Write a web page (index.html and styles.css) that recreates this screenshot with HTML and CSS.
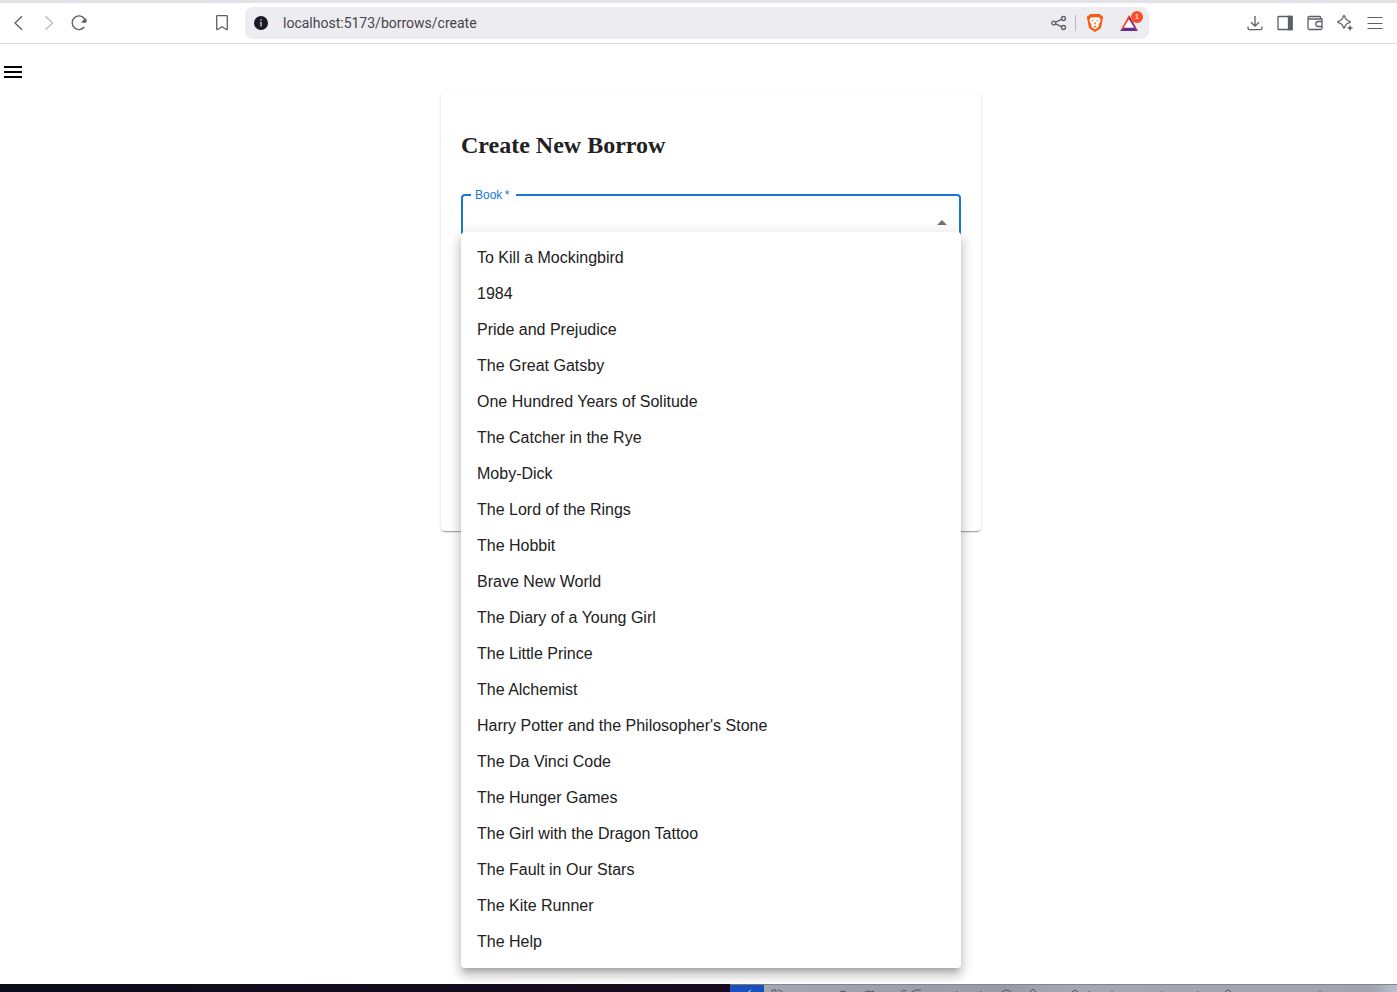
FILE: index.html
```html
<!DOCTYPE html>
<html lang="en">
<head>
<meta charset="utf-8">
<meta name="viewport" content="width=device-width, initial-scale=1">
<title>Create New Borrow</title>
<link rel="stylesheet" href="styles.css">
</head>
<body>
<header class="toolbar">
  <nav class="toolbar-left" aria-label="Navigation">
    <button class="tool" type="button" aria-label="Back"><svg viewBox="0 0 20 20"><path d="M13 3.3 6 10l7 6.7"/></svg></button>
    <button class="tool tool-off" type="button" aria-label="Forward" disabled><svg viewBox="0 0 20 20"><path d="m6.500 3.300 7 6.700-7 6.700"/></svg></button>
    <button class="tool" type="button" aria-label="Reload"><svg viewBox="0 0 20 20"><path d="M15.300 14a6.800 6.800 0 1 1 0-8.500l.7 2"/><path class="solid" d="m13.500 8.800 3.200-2.600.4 2.500-1.500.600z"/></svg></button>
    <button class="tool tool-end" type="button" aria-label="Bookmark"><svg viewBox="0 0 20 20"><path d="M4.700 3.400q0-.7.7-.7h9.200q.7 0 .7.700V16q0 1-.9.500L10 13.700l-4.400 2.800q-.9.500-.9-.5z"/></svg></button>
  </nav>
  <div class="address">
    <svg class="info" viewBox="0 0 14 14" aria-hidden="true"><circle cx="7" cy="7" r="7" fill="#1b1a22"/><path d="M6.2 3.3h1.700v1.500H6.200zM5.800 6h2.100v4.600H6.200V7.200h-.4z" fill="#aaa9b2"/></svg>
    <input class="url" type="text" aria-label="Address" value="localhost:5173/borrows/create">
    <button class="tool" type="button" aria-label="Share"><svg viewBox="0 0 20 20"><circle cx="4.700" cy="10" r="1.900"/><circle cx="14.500" cy="5.500" r="2"/><circle cx="14.500" cy="14.500" r="2"/><path d="m6.600 9.200 6-2.900M6.600 10.800l6 2.900"/></svg></button>
    <span class="divider"></span>
    <button class="tool shield" type="button" aria-label="Shields"><svg viewBox="0 0 20 20"><path fill="#fb5a12" stroke="none" d="M5.200 1h9.600l1.700 1.800h1.200l.3 3-.4 1-1.400 7.100q-.3 1.300-1.800 2.400L10 19l-4.400-2.700q-1.500-1.100-1.800-2.400L2.400 6.800l-.4-1 .3-3h1.200z"/><path fill="#fff" stroke="none" d="m6 4.300 2.200.2 1.800-.6 1.800.6 2.200-.2 1.700 2.400-.7 2.500-1.500 2.500.4 1.800-3.900 3-3.900-3 .4-1.800L5 9.200l-.7-2.500z"/><path fill="#fb5a12" stroke="none" d="m6 7 2.700.6-.8 1zM14 7l-2.700.6.8 1zM9.600 9h.8l.4 2.100-.8.700-.8-.7zM8.300 13.400l1.700-.7 1.700.7-1.700 1z"/></svg></button>
    <button class="tool rewards" type="button" aria-label="Rewards"><svg viewBox="0 0 20 20"><path fill="#ff4b24" stroke="none" d="M10 2v4.500L5 14.600 1 18z"/><path fill="#9b1f63" stroke="none" d="M10 2v4.500l5 8.100 4 3.400z"/><path fill="#662d91" stroke="none" d="M1 18h18l-4-3.400H5z"/><path fill="#fff" stroke="none" d="m10 6.500 5 8.100H5z"/></svg><span class="badge">1</span></button>
  </div>
  <div class="toolbar-right">
    <button class="tool" type="button" aria-label="Downloads"><svg viewBox="0 0 20 20"><path d="M10 3v10M6 9.300l4 3.900 4-3.900M3 13.500V15q0 1.700 1.700 1.700h10.600Q17 16.700 17 15v-1.500"/></svg></button>
    <button class="tool" type="button" aria-label="Side panel"><svg viewBox="0 0 20 20"><rect x="3" y="3.500" width="14" height="13" rx=".6"/><path class="solid" d="M13.500 3.500H17v13h-3.500z"/></svg></button>
    <button class="tool" type="button" aria-label="Wallet"><svg viewBox="0 0 20 20"><path d="M15.500 6V4.200q0-.7-.8-.7H4.500Q3 3.500 3 5v10q0 1.500 1.500 1.500h11q1.500 0 1.500-1.500V6H4.500Q3 6 3 5M17 8.500h-3.700a2.500 2.500 0 0 0 0 5H17"/></svg></button>
    <button class="tool" type="button" aria-label="Assistant"><svg viewBox="0 0 20 20"><path d="M8.400 3.200q.6-1 1.200 0 .8 4 5 5 1.300.8 0 1.500-4.200 1-5 5-.6 1-1.200 0-.8-4-5-5-1.300-.7 0-1.500 4.200-1 5-5z"/><path class="spark" d="m15 11.800.9 2.300 2.300.9-2.300.9-.9 2.300-.9-2.300-2.300-.9 2.300-.9z"/></svg></button>
    <button class="tool" type="button" aria-label="Main menu"><svg class="thin" viewBox="0 0 20 20"><path d="M2.500 4.500h15M2.500 10.500h15M2.500 15.500h15"/></svg></button>
  </div>
</header>
<div class="page">
  <aside class="rail">
    <button class="hamburger" type="button" aria-label="Open navigation"><svg viewBox="0 0 24 24"><path d="M3 18h18v-2H3zm0-5h18v-2H3zm0-7v2h18V6z"/></svg></button>
  </aside>
  <main class="content">
    <form class="card">
      <h2 class="title">Create New Borrow</h2>
      <div class="field">
        <fieldset class="outline">
          <legend class="legend"><label for="book">Book&thinsp;*</label></legend>
          <div class="control">
            <select class="select" id="book" required></select>
            <svg class="arrow" viewBox="0 0 24 24" aria-hidden="true"><path d="m7 14 5-5 5 5z"/></svg>
          </div>
        </fieldset>
        <ul class="menu" role="listbox" aria-label="Book">
          <li><button class="option" type="button" role="option">To Kill a Mockingbird</button></li>
          <li><button class="option" type="button" role="option">1984</button></li>
          <li><button class="option" type="button" role="option">Pride and Prejudice</button></li>
          <li><button class="option" type="button" role="option">The Great Gatsby</button></li>
          <li><button class="option" type="button" role="option">One Hundred Years of Solitude</button></li>
          <li><button class="option" type="button" role="option">The Catcher in the Rye</button></li>
          <li><button class="option" type="button" role="option">Moby-Dick</button></li>
          <li><button class="option" type="button" role="option">The Lord of the Rings</button></li>
          <li><button class="option" type="button" role="option">The Hobbit</button></li>
          <li><button class="option" type="button" role="option">Brave New World</button></li>
          <li><button class="option" type="button" role="option">The Diary of a Young Girl</button></li>
          <li><button class="option" type="button" role="option">The Little Prince</button></li>
          <li><button class="option" type="button" role="option">The Alchemist</button></li>
          <li><button class="option" type="button" role="option">Harry Potter and the Philosopher's Stone</button></li>
          <li><button class="option" type="button" role="option">The Da Vinci Code</button></li>
          <li><button class="option" type="button" role="option">The Hunger Games</button></li>
          <li><button class="option" type="button" role="option">The Girl with the Dragon Tattoo</button></li>
          <li><button class="option" type="button" role="option">The Fault in Our Stars</button></li>
          <li><button class="option" type="button" role="option">The Kite Runner</button></li>
          <li><button class="option" type="button" role="option">The Help</button></li>
        </ul>
      </div>
    </form>
  </main>
</div>
<footer class="desk">
  <span class="desk-dark"></span>
  <span class="desk-blue"><svg viewBox="0 0 34 8"><path d="m17 8 4-3" stroke="#c4d3f5"/></svg></span>
  <span class="desk-grey"><svg viewBox="0 0 633 8" preserveAspectRatio="xMinYMin slice"><path fill="none" stroke="#51545e" d="M8 7V5h4v2M14 5l3 1M18 7V6M76 7q3-2 6 0M101 7q3-2 6 0l3-1M137 7q2-3 5-1M148 7l4-2 5 0M193 6v1M217 6v1M238 7q5-4 9 0M266 7l3-3 3 3M308 7l3-2 3 2M325 6v2M348 6v1M398 6v1M434 6v1M461 7q3-4 6 0M556 6v1"/></svg></span>
</footer>
</body>
</html>
```
FILE: styles.css
```css
* { box-sizing: border-box; }

body {
  display: flex;
  flex-direction: column;
  min-height: 100vh;
  margin: 0;
  background: #fff;
  color: #212121;
  font-family: "Liberation Sans", Arial, sans-serif;
}

button {
  margin: 0;
  padding: 0;
  border: 0;
  background: none;
  color: inherit;
  font: inherit;
}

svg { display: block; }

.toolbar {
  display: flex;
  align-items: center;
  height: 44px;
  border-top: 3px solid #e2e2e8;
  border-bottom: 1px solid #dedee2;
}

.toolbar-left {
  display: flex;
  gap: 10px;
  width: 245px;
  padding: 0 13px 0 9px;
}

.toolbar-right {
  display: flex;
  justify-content: flex-end;
  gap: 10px;
  width: 248px;
  padding-right: 12px;
}

.tool {
  position: relative;
  flex: none;
  width: 20px;
  height: 20px;
  color: #5c5e68;
}

.tool svg {
  width: 20px;
  height: 20px;
  fill: none;
  stroke: currentColor;
  stroke-width: 1.3;
}

.tool .thin { stroke-width: 1; }
.tool .solid { fill: currentColor; }
.tool .spark { fill: currentColor; stroke: none; }
.tool-off { color: #b9bac0; }
.tool-end { margin-left: auto; }

.address {
  display: flex;
  flex: 1;
  align-items: center;
  min-width: 0;
  height: 32px;
  padding: 0 10px 0 9px;
  border-radius: 8px;
  background: #ededf1;
}

.info {
  flex: none;
  width: 14px;
  height: 14px;
}

.url {
  flex: 1;
  min-width: 0;
  height: 24px;
  margin: 0;
  padding: 0 0 0 15px;
  border: 0;
  outline: 0;
  background: none;
  color: #45444d;
  font-family: Roboto, sans-serif;
  font-size: 14px;
}

.divider {
  width: 1px;
  height: 16px;
  margin: 0 9px 0 6px;
  background: #b8b8c0;
}

.shield { margin-right: 14px; }

.badge {
  position: absolute;
  top: -2px;
  right: -4px;
  width: 12px;
  height: 12px;
  border-radius: 6px;
  background: #fa4d2a;
  color: #fff;
  font-size: 8px;
  line-height: 12px;
  text-align: center;
}

.page {
  display: flex;
  flex: 1;
  overflow: hidden;
}

.rail {
  width: 25px;
  padding: 16px 0 0 1px;
}

.hamburger, .hamburger svg {
  width: 24px;
  height: 24px;
}

.content {
  flex: 1;
  padding: 48px 0;
}

.card {
  max-width: 540px;
  margin: 0 auto;
  padding: 20px 20px 280px;
  border-radius: 4px;
  box-shadow: 0 2px 1px -1px rgba(0, 0, 0, .2), 0 1px 1px rgba(0, 0, 0, .14), 0 1px 3px rgba(0, 0, 0, .12);
}

.title {
  margin: 20px 0 30px;
  font-family: "Liberation Serif", "Times New Roman", serif;
  font-size: 24px;
  line-height: 26px;
}

.field { position: relative; }

.outline {
  min-width: 0;
  height: 63px;
  margin: 0;
  padding: 0 8px;
  border: 2px solid #1976d2;
  border-radius: 4px;
}

.legend {
  padding: 0 7px 0 4px;
  color: #1976d2;
  font-size: 12px;
  line-height: 14px;
}

.control {
  display: flex;
  align-items: center;
  height: 42px;
}

.select {
  flex: 1;
  min-width: 0;
  height: 40px;
  border: 0;
  outline: 0;
  background: none;
  appearance: none;
}

.arrow {
  width: 24px;
  height: 24px;
  margin-right: -3px;
  fill: #757575;
}

.menu {
  position: absolute;
  top: 44px;
  left: 0;
  width: 100%;
  margin: 0;
  padding: 8px 0;
  border-radius: 4px;
  background: #fff;
  list-style: none;
  box-shadow: 0 5px 5px -3px rgba(0, 0, 0, .2), 0 8px 10px 1px rgba(0, 0, 0, .14), 0 3px 14px 2px rgba(0, 0, 0, .12);
}

.option {
  display: block;
  width: 100%;
  padding: 6px 16px;
  font-size: 16px;
  line-height: 24px;
  text-align: left;
}

.desk {
  display: flex;
  height: 8px;
}

.desk-dark {
  flex: 730;
  background: linear-gradient(90deg, #0b0b1a, #180d20);
}

.desk-blue {
  flex: 34;
  border-top: 1px solid #77777d;
  background: #1a4fc0;
}

.desk-grey {
  flex: 633;
  overflow: hidden;
  border-top: 1px solid #85858b;
  background: linear-gradient(90deg, #a5a6af, #989aa4 38%, #a5a7b2 48%, #a1a3ae 96%, #b9c0d0);
}
```
